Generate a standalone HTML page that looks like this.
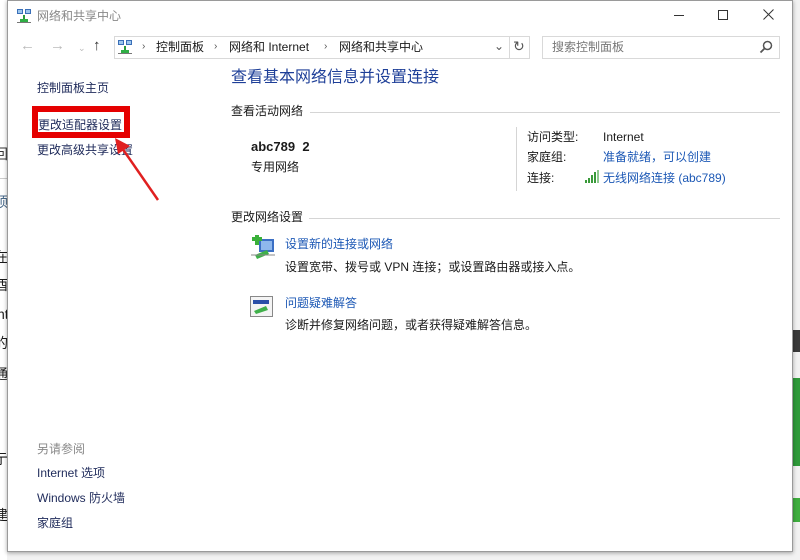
<!DOCTYPE html>
<html><head><meta charset="utf-8"><style>
*{margin:0;padding:0;box-sizing:border-box}
body{width:800px;height:560px;overflow:hidden;background:#f2f2f2;font-family:"Liberation Sans","Noto Sans CJK SC",sans-serif;font-size:12px;color:#1a1a1a;position:relative}
.a{position:absolute;white-space:nowrap;line-height:16px}
.win{position:absolute;left:7px;top:0;width:786px;height:552px;background:#fff;border:1px solid #9a9a9a;box-shadow:0 1px 4px rgba(0,0,0,.35)}
.blue{color:#1c58b5}
.lk{color:#1e2a5a}
.hl{position:absolute;height:1px;background:#d5d5d5}
</style></head><body>
<div style="position:absolute;left:0;top:0;width:7px;height:560px;background:#fff"></div>
<div class="a" style="left:-6px;top:146px;font-size:14px;color:#333">回</div>
<div class="a" style="left:-6px;top:194px;font-size:14px;color:#4a6a8a">顶</div>
<div style="position:absolute;left:0;top:178px;width:7px;height:1px;background:#ccc"></div>
<div class="a" style="left:-6px;top:249px;font-size:14px">在</div>
<div class="a" style="left:-6px;top:277px;font-size:14px">酉</div>
<div class="a" style="left:-3px;top:306px;font-size:14px">nt</div>
<div class="a" style="left:-6px;top:335px;font-size:14px">的</div>
<div class="a" style="left:-6px;top:366px;font-size:14px">通</div>
<div class="a" style="left:-6px;top:451px;font-size:14px">亍</div>
<div class="a" style="left:-6px;top:507px;font-size:14px">建</div>
<div style="position:absolute;left:793px;top:330px;width:7px;height:22px;background:#3a3a3a"></div>
<div style="position:absolute;left:793px;top:378px;width:7px;height:88px;background:#2f9a3a"></div>
<div style="position:absolute;left:793px;top:498px;width:7px;height:24px;background:#3fae3f"></div>

<div class="win"></div>
<svg style="position:absolute;left:16px;top:8px" width="16" height="16" viewBox="0 0 16 16"><rect x="1" y="1" width="6" height="5" fill="#3a6fb8"/><rect x="9" y="1" width="6" height="5" fill="#3a6fb8"/><rect x="2" y="2" width="4" height="3" fill="#9cc6ee"/><rect x="10" y="2" width="4" height="3" fill="#9cc6ee"/><rect x="7" y="7" width="2" height="4" fill="#2a9a3a"/><rect x="4" y="11" width="8" height="3" fill="#2fae45"/><rect x="1" y="14" width="14" height="1" fill="#777"/></svg>
<div class="a" style="left:37px;top:8px;color:#888">网络和共享中心</div>
<div style="position:absolute;left:674px;top:15px;width:10px;height:1px;background:#333"></div>
<div style="position:absolute;left:718px;top:10px;width:10px;height:10px;border:1px solid #333"></div>
<svg style="position:absolute;left:763px;top:9px" width="11" height="11"><path d="M0.5 0.5L10.5 10.5M10.5 0.5L0.5 10.5" stroke="#333" stroke-width="1"/></svg>
<div class="a" style="left:20px;top:38px;font-size:15px;color:#bbb">←</div>
<div class="a" style="left:50px;top:38px;font-size:15px;color:#bbb">→</div>
<div class="a" style="left:78px;top:40px;font-size:9px;color:#bbb">⌄</div>
<div class="a" style="left:93px;top:38px;font-size:15px;color:#333">↑</div>
<div style="position:absolute;left:114px;top:36px;width:416px;height:23px;border:1px solid #d9d9d9"></div>
<div style="position:absolute;left:509px;top:36px;width:1px;height:23px;background:#d9d9d9"></div>
<svg style="position:absolute;left:117px;top:39px" width="16" height="16" viewBox="0 0 16 16"><rect x="1" y="1" width="6" height="5" fill="#3a6fb8"/><rect x="9" y="1" width="6" height="5" fill="#3a6fb8"/><rect x="2" y="2" width="4" height="3" fill="#9cc6ee"/><rect x="10" y="2" width="4" height="3" fill="#9cc6ee"/><rect x="7" y="7" width="2" height="4" fill="#2a9a3a"/><rect x="4" y="11" width="8" height="3" fill="#2fae45"/><rect x="1" y="14" width="14" height="1" fill="#777"/></svg>
<div class="a" style="left:142px;top:39px;color:#555;font-size:10px">›</div>
<div class="a" style="left:156px;top:39px">控制面板</div>
<div class="a" style="left:214px;top:39px;color:#555;font-size:10px">›</div>
<div class="a" style="left:229px;top:39px">网络和 Internet</div>
<div class="a" style="left:324px;top:39px;color:#555;font-size:10px">›</div>
<div class="a" style="left:339px;top:39px">网络和共享中心</div>
<div class="a" style="left:494px;top:38px;color:#555">⌄</div>
<div class="a" style="left:513px;top:38px;color:#555;font-size:14px">↻</div>
<div style="position:absolute;left:542px;top:36px;width:238px;height:23px;border:1px solid #d9d9d9"></div>
<div class="a" style="left:552px;top:39px;color:#777">搜索控制面板</div>
<svg style="position:absolute;left:759px;top:40px" width="14" height="14" viewBox="0 0 14 14"><circle cx="8.5" cy="5.5" r="4" fill="none" stroke="#555" stroke-width="1.5"/><line x1="5.5" y1="8.5" x2="1.5" y2="12.5" stroke="#555" stroke-width="1.8"/></svg>
<div class="a lk" style="left:37px;top:80px">控制面板主页</div>
<div style="position:absolute;left:32px;top:106px;width:98px;height:32px;border:6px solid #e50000"></div>
<div class="a lk" style="left:38px;top:117px">更改适配器设置</div>
<div class="a lk" style="left:37px;top:142px">更改高级共享设置</div>
<svg style="position:absolute;left:100px;top:130px" width="70" height="80"><line x1="58" y1="70" x2="22" y2="18" stroke="#e02020" stroke-width="2.5"/><polygon points="15,8 30,16 18,24" fill="#e02020"/></svg>
<div class="a" style="left:37px;top:441px;color:#888">另请参阅</div>
<div class="a lk" style="left:37px;top:465px">Internet 选项</div>
<div class="a lk" style="left:37px;top:490px">Windows 防火墙</div>
<div class="a lk" style="left:37px;top:515px">家庭组</div>
<div class="a" style="left:231px;top:68px;font-size:16px;line-height:20px;color:#1e3f98">查看基本网络信息并设置连接</div>
<div class="a" style="left:231px;top:103px">查看活动网络</div>
<div class="hl" style="left:310px;top:112px;width:470px"></div>
<div class="a" style="left:251px;top:139px;font-weight:bold;font-size:13px">abc789&nbsp; 2</div>
<div class="a" style="left:251px;top:159px">专用网络</div>
<div style="position:absolute;left:516px;top:127px;width:1px;height:64px;background:#d5d5d5"></div>
<div class="a" style="left:527px;top:129px">访问类型:</div>
<div class="a" style="left:603px;top:129px">Internet</div>
<div class="a" style="left:527px;top:149px">家庭组:</div>
<div class="a blue" style="left:603px;top:149px">准备就绪，可以创建</div>
<div class="a" style="left:527px;top:170px">连接:</div>
<svg style="position:absolute;left:585px;top:170px" width="14" height="13"><rect x="0" y="10" width="2" height="3" fill="#3a9a3a"/><rect x="3" y="8" width="2" height="5" fill="#3a9a3a"/><rect x="6" y="5" width="2" height="8" fill="#3a9a3a"/><rect x="9" y="2" width="2" height="11" fill="#3a9a3a"/><rect x="12" y="0" width="2" height="13" fill="#8fc98f"/></svg>
<div class="a blue" style="left:603px;top:170px">无线网络连接 (abc789)</div>
<div class="a" style="left:231px;top:209px">更改网络设置</div>
<div class="hl" style="left:309px;top:218px;width:471px"></div>
<svg style="position:absolute;left:249px;top:235px" width="28" height="26"><rect x="10" y="4" width="15" height="13" fill="#3b6fc4"/><rect x="12" y="6" width="11" height="9" fill="#8fb8ec"/><rect x="3" y="2" width="10" height="4" fill="#3ab03a"/><rect x="6" y="0" width="4" height="10" fill="#3ab03a"/><polygon points="6,20 18,15 20,19 8,24" fill="#3fb04a"/><line x1="2" y1="20" x2="26" y2="20" stroke="#888"/></svg>
<div class="a blue" style="left:285px;top:236px">设置新的连接或网络</div>
<div class="a" style="left:285px;top:259px">设置宽带、拨号或 VPN 连接；或设置路由器或接入点。</div>
<svg style="position:absolute;left:250px;top:296px" width="24" height="22"><rect x="0.5" y="0.5" width="22" height="20" fill="#f4f4f4" stroke="#888"/><rect x="3" y="4" width="16" height="4" fill="#2a4fa8"/><polygon points="4,15 16,10 18,14 6,18" fill="#3fb04a"/></svg>
<div class="a blue" style="left:285px;top:295px">问题疑难解答</div>
<div class="a" style="left:285px;top:317px">诊断并修复网络问题，或者获得疑难解答信息。</div>
</body></html>
